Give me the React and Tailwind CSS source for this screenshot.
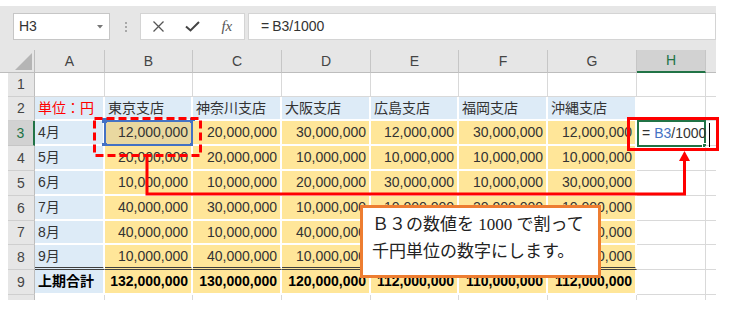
import React from 'react';

const COLW = ['w-[70px]', 'w-[88px]', 'w-[89px]', 'w-[89px]', 'w-[88px]', 'w-[89px]', 'w-[89px]', 'w-[69px]', 'w-[10px]'];
const LETTERS = ['A', 'B', 'C', 'D', 'E', 'F', 'G', 'H', ''];

const ROWS = [
  { n: 1, h: 'h-[24px]', v: [] },
  { n: 2, h: 'h-[24px]', v: ['単位：円', '東京支店', '神奈川支店', '大阪支店', '広島支店', '福岡支店', '沖縄支店'] },
  { n: 3, h: 'h-[25px]', v: ['4月', '12,000,000', '20,000,000', '30,000,000', '12,000,000', '30,000,000', '12,000,000'] },
  { n: 4, h: 'h-[25px]', v: ['5月', '20,000,000', '20,000,000', '10,000,000', '10,000,000', '10,000,000', '10,000,000'] },
  { n: 5, h: 'h-[25px]', v: ['6月', '10,000,000', '10,000,000', '20,000,000', '30,000,000', '10,000,000', '30,000,000'] },
  { n: 6, h: 'h-[25px]', v: ['7月', '40,000,000', '30,000,000', '10,000,000', '10,000,000', '20,000,000', '10,000,000'] },
  { n: 7, h: 'h-[24px]', v: ['8月', '40,000,000', '10,000,000', '40,000,000', '40,000,000', '20,000,000', '40,000,000'] },
  { n: 8, h: 'h-[25px]', v: ['9月', '10,000,000', '40,000,000', '10,000,000', '10,000,000', '20,000,000', '10,000,000'] },
  { n: 9, h: 'h-[25px]', v: ['上期合計', '132,000,000', '130,000,000', '120,000,000', '112,000,000', '110,000,000', '112,000,000'] },
  { n: 10, h: 'h-[5px]', v: [] },
];

function cellClasses(r, c) {
  const filled = r >= 2 && r <= 9 && c <= 6;
  let bg = '';
  if (filled) {
    if (r === 3 && c === 1) bg = 'bg-[#e9d8a0]';
    else if (r === 2 || c === 0) bg = 'bg-[#ddebf7]';
    else bg = 'bg-[#ffe699]';
  }
  let border;
  if (filled) {
    border = r === 8
      ? 'border-r-2 border-r-white border-b-[3px] border-b-[#3f3f3f] border-double'
      : 'border-r-2 border-b-2 border-white';
  } else if (r === 10) {
    border = c === 8 ? '' : 'border-r border-[#d9d9d9]';
  } else {
    border = c === 8 ? 'border-b border-[#d9d9d9]' : 'border-r border-b border-[#d9d9d9]';
  }
  const left = c === 0 || r === 2 || c >= 7;
  const align = left ? 'justify-start pl-[3px]' : 'justify-end pr-[3px]';
  let text = 'text-[#333]';
  if (r === 2 && c === 0) text = 'text-[#ff0000]';
  if (r === 9) text = 'text-black font-bold';
  return `${bg} ${border} ${align} ${text}`;
}

function FormulaBar() {
  return (
    <div className="flex h-[44px] items-start pt-[7px] pl-[13px]">
      <div className="w-[97px] h-[27px] bg-white border border-[#c6c6c6] flex items-center justify-between pl-[5px] pr-[6px]">
        <span className="text-[14px] text-[#333]">H3</span>
        <svg width="6" height="4" viewBox="0 0 6 4"><path d="M0 0H6L3 3.5Z" fill="#777" /></svg>
      </div>
      <div className="ml-[14px] w-[3px] h-[27px] flex flex-col items-center justify-center gap-[2px]">
        <div className="w-[2px] h-[2px] bg-[#a8a8a8]" />
        <div className="w-[2px] h-[2px] bg-[#a8a8a8]" />
        <div className="w-[2px] h-[2px] bg-[#a8a8a8]" />
      </div>
      <div className="ml-[13px] w-[105px] h-[27px] bg-white border border-[#d4d4d4] flex items-center">
        <div className="w-[35px] flex justify-center">
          <svg width="11" height="11" viewBox="0 0 11 11">
            <path d="M0.5 0.5L10.5 10.5M10.5 0.5L0.5 10.5" stroke="#555" strokeWidth="1.3" fill="none" />
          </svg>
        </div>
        <div className="w-[35px] flex justify-center">
          <svg width="15" height="11" viewBox="0 0 15 11">
            <path d="M1 5.5L5.5 9.5L14 1" stroke="#444" strokeWidth="2" fill="none" />
          </svg>
        </div>
        <div className="w-[35px] flex justify-center">
          <span className="font-['Liberation_Serif',serif] italic text-[15px] leading-none text-[#555]">fx</span>
        </div>
      </div>
      <div className="ml-[3px] flex-1 h-[27px] bg-white border border-[#d4d4d4] flex items-center pl-[12px] text-[14px] text-[#333]">
        <span className="mr-[3px]">=</span>B3/1000
      </div>
    </div>
  );
}

function HeaderRow() {
  return (
    <div className="flex h-[23px]">
      <div className="w-[35px] h-[23px] border-r border-b border-r-[#bdbdbd] border-b-[#bdbdbd] flex items-end justify-end pr-[2px] pb-[2px]">
        <svg width="17" height="17" viewBox="0 0 17 17"><path d="M17 0V17H0Z" fill="#b5b5b5" /></svg>
      </div>
      {LETTERS.map((l, c) => {
        let cls;
        if (c === 7) cls = 'bg-[#d2d2d2] text-[#217346] border-r border-r-[#c6c6c6] border-b-2 border-b-[#217346]';
        else if (c === 8) cls = 'border-b border-b-[#bdbdbd]';
        else cls = 'text-[#444] border-r border-b border-r-[#c6c6c6] border-b-[#bdbdbd]';
        return (
          <div key={c} className={`${COLW[c]} h-[23px] flex items-center justify-center text-[14px] ${cls}`}>
            {l}
          </div>
        );
      })}
    </div>
  );
}

function Row({ row }) {
  const r = row.n;
  const hdr = r === 3
    ? 'bg-[#d2d2d2] text-[#217346] border-r-2 border-r-[#217346] border-b border-b-[#c6c6c6]'
    : r === 10
      ? 'bg-[#e6e6e6] border-r border-r-[#bdbdbd]'
      : 'bg-[#e6e6e6] text-[#444] border-r border-b border-r-[#bdbdbd] border-b-[#cfcfcf]';
  return (
    <div className={`flex ${row.h}`}>
      <div className="w-[8px]" />
      <div className={`w-[27px] ${row.h} flex items-center justify-center text-[14px] ${hdr}`}>
        {r === 10 ? '' : r}
      </div>
      {COLW.map((w, c) => (
        <div key={c} className={`relative ${w} ${row.h} flex items-center whitespace-nowrap text-[14px] ${cellClasses(r, c)}`}>
          {r === 3 && c === 1 && (
            <div className="absolute -left-[1px] -top-[1px] -right-[2px] -bottom-[2px] border-2 border-[#4472c4]">
              <div className="absolute -left-[4px] -top-[4px] w-[5px] h-[5px] bg-[#4472c4]" />
              <div className="absolute -right-[4px] -top-[4px] w-[5px] h-[5px] bg-[#4472c4]" />
              <div className="absolute -left-[4px] -bottom-[4px] w-[5px] h-[5px] bg-[#4472c4]" />
              <div className="absolute -right-[4px] -bottom-[4px] w-[5px] h-[5px] bg-[#4472c4]" />
            </div>
          )}
          {r === 3 && c === 7 && (
            <div className="absolute left-0 -top-[1px] -right-[1px] -bottom-[2px] border-2 border-[#217346]">
              <div className="absolute -right-[3px] -bottom-[3px] w-[5px] h-[5px] bg-[#217346] border border-white" />
            </div>
          )}
          {r === 3 && c === 7 ? (
            <span className="relative pl-[2px]">
              <span className="mr-[4px]">=</span><span className="text-[#4472c4]">B3</span>/1000
            </span>
          ) : (
            <span className="relative">{row.v[c] || ''}</span>
          )}
        </div>
      ))}
    </div>
  );
}

export default function App() {
  return (
    <div className="relative w-[729px] h-[311px] bg-white overflow-hidden font-['Liberation_Sans','Noto_Sans_CJK_JP',sans-serif]">
      <div className="h-[6px]" />
      <div className="w-[716px] bg-[#e6e6e6]">
        <FormulaBar />
        <HeaderRow />
      </div>
      <div className="w-[716px]">
        {ROWS.map((row) => (
          <Row key={row.n} row={row} />
        ))}
      </div>

      <svg className="absolute left-0 top-0 pointer-events-none" width="729" height="311" viewBox="0 0 729 311">
        <rect x="94.5" y="118.5" width="106" height="37" fill="none" stroke="#ff0000" strokeWidth="3" strokeDasharray="8 4" />
        <polyline points="147,157 147,194 684.5,194 684.5,160" fill="none" stroke="#ff0000" strokeWidth="3" />
        <polygon points="684.5,151 679,161 690,161" fill="#ff0000" />
        <rect x="628.5" y="118.5" width="89" height="31" fill="none" stroke="#ff0000" strokeWidth="3" />
        <line x1="709.5" y1="123" x2="709.5" y2="147" stroke="#000" strokeWidth="1" />
      </svg>

      <div className="absolute left-[360px] top-[205px] w-[241px] h-[73px] bg-white border-[3px] border-[#ed7d31] pl-[9px] pt-[3px] text-[17px] leading-[27px] text-[#222] font-['Liberation_Serif','Noto_Sans_CJK_JP',serif] whitespace-nowrap">
        <div>Ｂ３の数値を 1000 で割って</div>
        <div>千円単位の数字にします。</div>
      </div>
    </div>
  );
}
